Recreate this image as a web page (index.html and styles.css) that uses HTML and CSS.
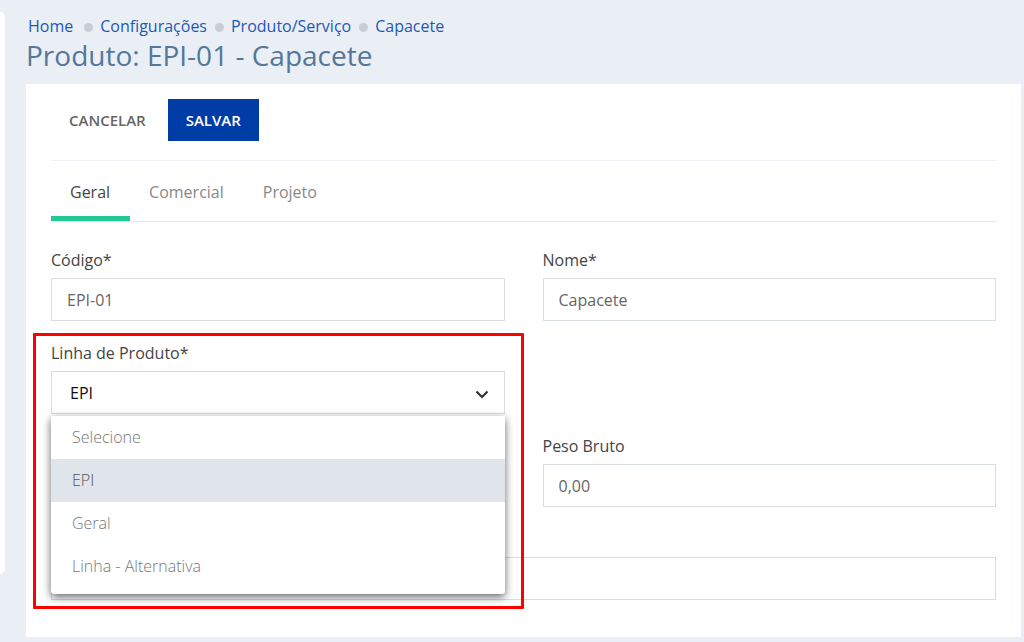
FILE: index.html
```
<!DOCTYPE html>
<html lang="pt-BR">

<head>
	<meta charset="utf-8">
	<title>Produto: EPI-01 - Capacete</title>
	<link rel="stylesheet" href="styles.css">
</head>

<body>
	<div class="sidebar"></div>
	<main class="content">
		<nav class="breadcrumb">
			<a class="home" href="#">Home</a>
			<a href="#">Configurações</a>
			<a href="#">Produto/Serviço</a>
			<a href="#">Capacete</a>
		</nav>
		<h1>Produto: EPI-01 - Capacete</h1>
		<form class="panel">
			<div class="actions">
				<button type="button" class="btn">CANCELAR</button>
				<button type="submit" class="btn btn-primary">SALVAR</button>
			</div>
			<div class="tabs">
				<a class="tab active" href="#">Geral</a>
				<a class="tab" href="#">Comercial</a>
				<a class="tab" href="#">Projeto</a>
			</div>
			<div class="fields">
				<div class="field">
					<label for="codigo">Código*</label>
					<input type="text" id="codigo" value="EPI-01">
				</div>
				<div class="field">
					<label for="nome">Nome*</label>
					<input type="text" id="nome" value="Capacete">
				</div>
				<div class="field highlight">
					<label for="linha">Linha de Produto*</label>
					<div class="dropdown">
						<select id="linha">
							<option>EPI</option>
						</select>
						<svg class="chevron" width="14" height="9" viewBox="0 0 14 9"><path d="M1.500 1.500 7 7l5.500-5.500" fill="none" stroke="#333" stroke-width="2.200"/></svg>
						<ul class="menu">
							<li>Selecione</li>
							<li class="selected">EPI</li>
							<li>Geral</li>
							<li>Linha - Alternativa</li>
						</ul>
					</div>
				</div>
				<div class="field right">
					<label for="peso">Peso Bruto</label>
					<input type="text" id="peso" value="0,00">
				</div>
				<!-- full width row, its top is under the open menu -->
				<div class="field wide">
					<input type="text" id="obs" aria-label="Observação">
				</div>
			</div>
		</form>
	</main>
</body>

</html>
```

FILE: styles.css
```
* {
	box-sizing: border-box;
}
body {
	display: flex;
	gap: 21px;
	margin: 0;
	padding: 12px 3px 5px 0;
	min-height: 100vh;
	background: #eaeff6;
	color: #444;
	font-family: "Open Sans", sans-serif;
	font-size: 16px;
	line-height: 24px;
}
.sidebar {
	width: 5px;
	margin-bottom: 63px;
	background: #fff;
	border-radius: 0 5px 5px 0;
}
.content {
	flex: 1;
}
.breadcrumb {
	display: flex;
	align-items: center;
	padding: 2px 2px 0;
}
.breadcrumb a {
	color: #1f58b5;
	text-decoration: none;
}
.breadcrumb .home {
	margin-right: 3px;
}
.breadcrumb a + a::before {
	content: "";
	display: inline-block;
	width: 9px;
	height: 9px;
	margin: 0 7px 0 8px;
	border-radius: 50%;
	background: #c5ced6;
}
h1 {
	margin: 0 0 12px;
	color: #54779a;
	font-size: 28px;
	font-weight: 400;
	line-height: 34px;
}
.panel {
	padding: 15px 25px 37px;
	background: #fff;
}
.actions {
	display: flex;
	padding-bottom: 19px;
	border-bottom: 1px solid #f0f1f7;
}
.btn {
	height: 42px;
	padding: 0 18px;
	border: 0;
	background: none;
	color: #666;
	font-family: inherit;
	font-size: 15px;
	font-weight: 600;
}
.btn-primary {
	margin-left: 4px;
	background: #003ca6;
	color: #fff;
}
.tabs {
	display: flex;
	border-bottom: 1px solid #e6e8ee;
}
.tab {
	height: 60px;
	padding: 19px 20px 0 19px;
	color: #888;
	text-decoration: none;
}
.tab.active {
	border-bottom: 5px solid #23c897;
	color: #444;
}
.fields {
	display: grid;
	grid-template-columns: 1fr 1fr;
	gap: 20px 38px;
	padding-top: 26px;
}
.field {
	display: flex;
	flex-direction: column;
	gap: 6px;
}
.right {
	grid-area: 3 / 2;
}
.wide {
	grid-column: 1 / 3;
	padding-top: 30px;
}
input, select {
	width: 100%;
	height: 43px;
	padding: 0 15px;
	border: 1px solid #d8dde1;
	border-radius: 0;
	background: #fff;
	color: #666;
	font-family: inherit;
	font-size: 16px;
}
select {
	display: block;
	appearance: none;
	padding: 0 18px;
	color: #111;
}
.dropdown {
	position: relative;
}
.chevron {
	position: absolute;
	top: 19px;
	right: 16px;
	pointer-events: none;
}
.menu {
	position: absolute;
	top: 100%;
	left: 0;
	right: 0;
	z-index: 1;
	margin: 2px 0 0;
	padding: 0 0 6px;
	list-style: none;
	background: #fff;
	border-radius: 0 0 3px 3px;
	box-shadow: 0 3px 8px rgba(0, 0, 0, 0.6);
	color: #777;
	font-weight: 300;
}
.menu li {
	height: 43px;
	padding: 0 21px;
	line-height: 43px;
}
.menu .selected {
	background: #e0e4eb;
	color: #555;
}
.highlight {
	position: relative;
}
/* red frame round the field and its open menu */
.highlight::after {
	content: "";
	position: absolute;
	top: -8px;
	bottom: -195px;
	left: -18px;
	right: -19px;
	z-index: 2;
	border: 3px solid #fe0000;
	border-radius: 1px;
	pointer-events: none;
}
```
